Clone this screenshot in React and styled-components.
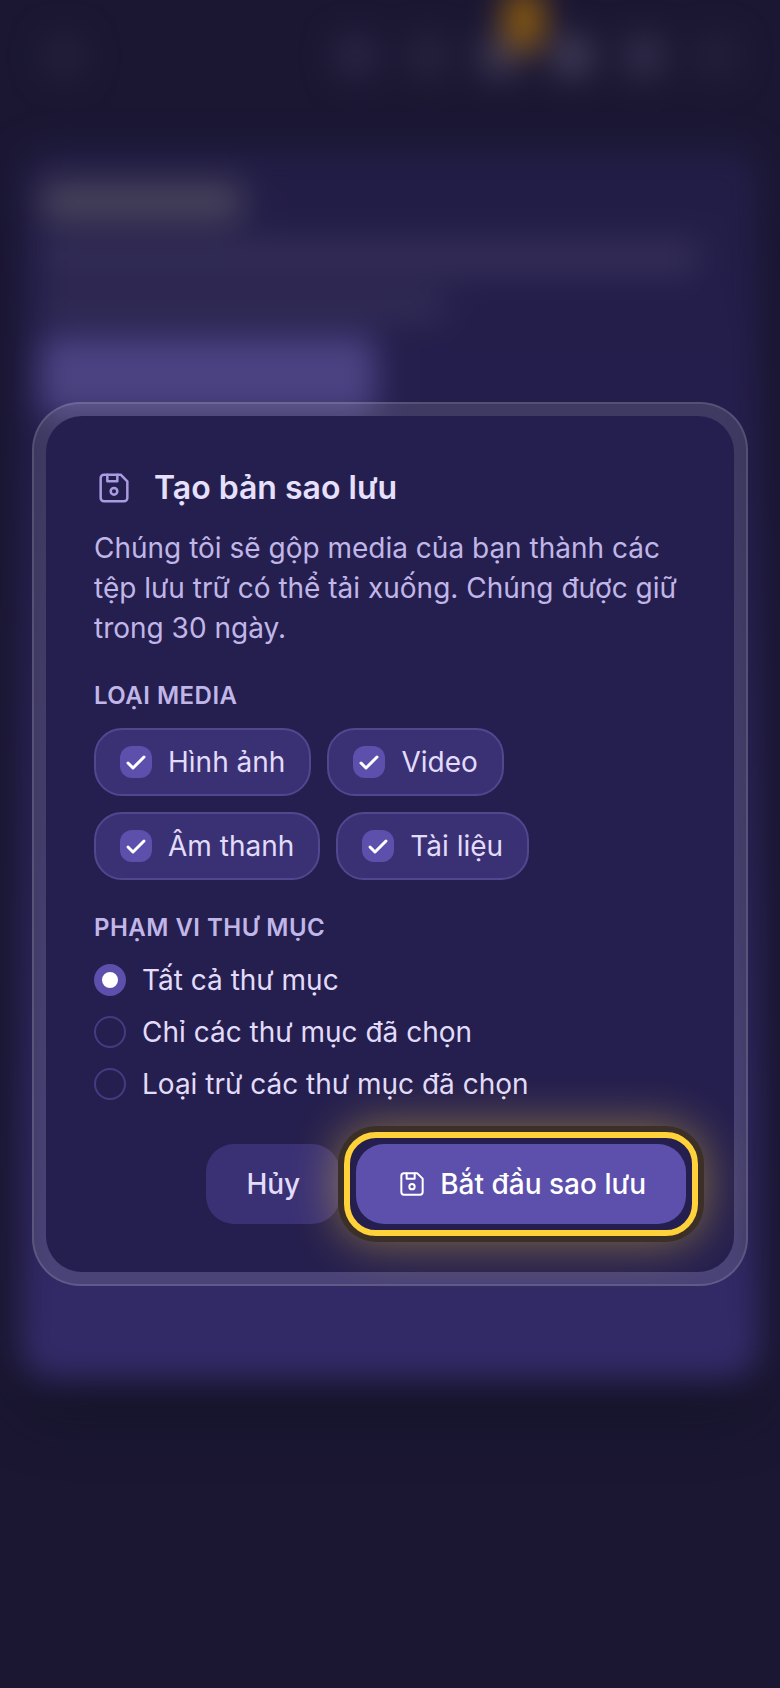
import React from "react";
import styled, { createGlobalStyle, css } from "styled-components";

const GlobalStyle = createGlobalStyle`
  *, *::before, *::after { box-sizing: border-box; }
  html, body { margin: 0; background: #1b1733; }
  body { font-family: Inter, "Noto Sans", sans-serif; font-size: 28px; line-height: 40px; color: #e2dcfa; }
  button, input { font: inherit; margin: 0; }
`;

const Screen = styled.div`
  position: relative;
  min-height: 100vh;
  display: flex;
  overflow: hidden;
`;

const Backdrop = styled.div`
  position: absolute;
  inset: 0;
  filter: blur(16px);
`;

const TopBar = styled.div`
  display: flex;
  align-items: center;
  gap: 32px;
  height: 112px;
  padding: 0 44px;
`;

const Dot = styled.span`
  position: relative;
  width: 40px;
  height: 40px;
  border-radius: 12px;
  background: ${(p) => p.$tone};
  ${(p) => p.$first && css`margin-right: auto;`}
`;

const Badge = styled.span`
  position: absolute;
  left: 24px;
  top: -48px;
  width: 40px;
  height: 64px;
  border-radius: 20px;
  background: #8a5a10;
`;

const PageCard = styled.div`
  display: flex;
  flex-direction: column;
  gap: 16px;
  margin: 36px 20px 0;
  height: calc(100vh - 456px);
  padding: 32px 20px;
  border-radius: 32px;
  background: linear-gradient(#221d45, #251f4f 25%, #332b69);
  box-shadow: 0 32px 48px rgba(16, 15, 30, 0.6);
`;

const Bar = styled.span`
  width: ${(p) => p.$width};
  height: ${(p) => p.$height}px;
  border-radius: 12px;
  background: ${(p) => p.$tone};
`;

const Overlay = styled.div`
  position: relative;
  flex: 1;
  display: flex;
  align-items: center;
  justify-content: center;
  padding: 32px;
`;

const Frame = styled.div`
  width: 100%;
  max-width: 960px;
  padding: 12px;
  border: 2px solid rgba(255, 255, 255, 0.12);
  border-radius: 48px;
  background: rgba(255, 255, 255, 0.12);
`;

const Dialog = styled.form`
  display: flex;
  flex-direction: column;
  padding: 48px;
  border-radius: 36px;
  background: #251f4f;
`;

const Title = styled.h1`
  display: flex;
  align-items: center;
  gap: 20px;
  margin: 0 0 16px;
  font-size: 32px;
  line-height: 48px;
  font-weight: 600;
  color: #e6e0fc;
  svg { color: #a99ce0; }
`;

const Intro = styled.p`
  margin: 0;
  color: #c1b6e8;
`;

const Group = styled.fieldset`
  min-width: 0;
  margin: 32px 0 0;
  padding: 0;
  border: 0;
`;

const Legend = styled.legend`
  padding: 0;
  margin-bottom: 16px;
  font-size: 24px;
  line-height: 32px;
  font-weight: 600;
  letter-spacing: 0.02em;
  text-transform: uppercase;
  color: #c1b6e8;
`;

const Chips = styled.div`
  display: flex;
  flex-wrap: wrap;
  gap: 16px;
`;

const Chip = styled.label`
  display: flex;
  align-items: center;
  gap: 16px;
  padding: 12px 24px;
  border: 2px solid #51478f;
  border-radius: 28px;
  background: #3a3175;
`;

const CheckWrap = styled.span`
  display: grid;
  width: 32px;
  height: 32px;
  > * { grid-area: 1 / 1; }
  svg { pointer-events: none; z-index: 1; }
`;

const CheckInput = styled.input`
  appearance: none;
  width: 32px;
  height: 32px;
  border-radius: 12px;
  background: #5c50ac;
`;

const Radios = styled.div`
  display: flex;
  flex-direction: column;
  gap: 12px;
`;

const RadioRow = styled.label`
  display: flex;
  align-items: center;
  gap: 16px;
`;

const RadioInput = styled.input`
  appearance: none;
  width: 32px;
  height: 32px;
  border: 2px solid #453b80;
  border-radius: 50%;
  &:checked {
    border: 8px solid #5c50ac;
    background: #ffffff;
  }
`;

const Actions = styled.div`
  display: flex;
  justify-content: flex-end;
  gap: 16px;
  margin-top: 40px;
`;

const Button = styled.button`
  position: relative;
  display: flex;
  align-items: center;
  gap: 12px;
  height: 80px;
  padding: 0 40px;
  border: 0;
  border-radius: 28px;
  font-weight: 500;
  color: ${(p) => (p.$primary ? "#ffffff" : "#e2dcfa")};
  background: ${(p) => (p.$primary ? "#5c50ac" : "#3a3175")};
  ${(p) =>
    p.$highlighted &&
    css`
      &::after {
        content: "";
        position: absolute;
        inset: -12px;
        border: 6px solid #ffd23a;
        border-radius: 32px;
        box-shadow: 0 0 0 6px #3b2f27, 0 0 48px 6px rgba(255, 210, 58, 0.45);
        pointer-events: none;
      }
    `}
`;

const FloppyIcon = ({ size }) => (
  <svg width={size} height={size} viewBox="0 0 24 24" fill="none" stroke="currentColor" strokeWidth="1.5" strokeLinecap="round" strokeLinejoin="round" aria-hidden="true">
    <path d="M6 4h10l4 4v10a2 2 0 0 1-2 2H6a2 2 0 0 1-2-2V6a2 2 0 0 1 2-2" />
    <circle cx="12" cy="14" r="2" />
    <path d="M14 4v4H8V4" />
  </svg>
);

const CheckIcon = () => (
  <svg width="32" height="32" viewBox="0 0 32 32" fill="none" stroke="#ffffff" strokeWidth="3" strokeLinecap="round" strokeLinejoin="round" aria-hidden="true">
    <path d="M8 17l5 5L24 11" />
  </svg>
);

const MEDIA = ["Hình ảnh", "Video", "Âm thanh", "Tài liệu"];
const SCOPES = ["Tất cả thư mục", "Chỉ các thư mục đã chọn", "Loại trừ các thư mục đã chọn"];

export default function App() {
  return (
    <Screen>
      <GlobalStyle />
      <Backdrop aria-hidden="true">
        <TopBar>
          <Dot $tone="#252039" $first />
          <Dot $tone="#2b2644" />
          <Dot $tone="#28233f" />
          <Dot $tone="#3d3853"><Badge /></Dot>
          <Dot $tone="#413c58" />
          <Dot $tone="#332e4b" />
          <Dot $tone="#24203c" />
        </TopBar>
        <PageCard>
          <Bar $width="29%" $height={44} $tone="#454059" />
          <Bar $width="94%" $height={36} $tone="#332d57" />
          <Bar $width="58%" $height={28} $tone="#332d57" />
          <Bar $width="48%" $height={80} $tone="#4b4282" />
        </PageCard>
      </Backdrop>
      <Overlay>
        <Frame>
          <Dialog role="dialog" aria-labelledby="dialog-title" onSubmit={(e) => e.preventDefault()}>
            <Title id="dialog-title">
              <FloppyIcon size={40} />
              Tạo bản sao lưu
            </Title>
            <Intro>
              Chúng tôi sẽ gộp media của bạn thành các tệp lưu trữ có thể tải xuống. Chúng được giữ trong 30 ngày.
            </Intro>
            <Group>
              <Legend>Loại media</Legend>
              <Chips>
                {MEDIA.map((name) => (
                  <Chip key={name}>
                    <CheckWrap>
                      <CheckInput type="checkbox" defaultChecked />
                      <CheckIcon />
                    </CheckWrap>
                    {name}
                  </Chip>
                ))}
              </Chips>
            </Group>
            <Group>
              <Legend>Phạm vi thư mục</Legend>
              <Radios>
                {SCOPES.map((name, i) => (
                  <RadioRow key={name}>
                    <RadioInput type="radio" name="scope" defaultChecked={i === 0} />
                    {name}
                  </RadioRow>
                ))}
              </Radios>
            </Group>
            <Actions>
              <Button type="button">Hủy</Button>
              <Button type="submit" $primary $highlighted>
                <FloppyIcon size={32} />
                Bắt đầu sao lưu
              </Button>
            </Actions>
          </Dialog>
        </Frame>
      </Overlay>
    </Screen>
  );
}
